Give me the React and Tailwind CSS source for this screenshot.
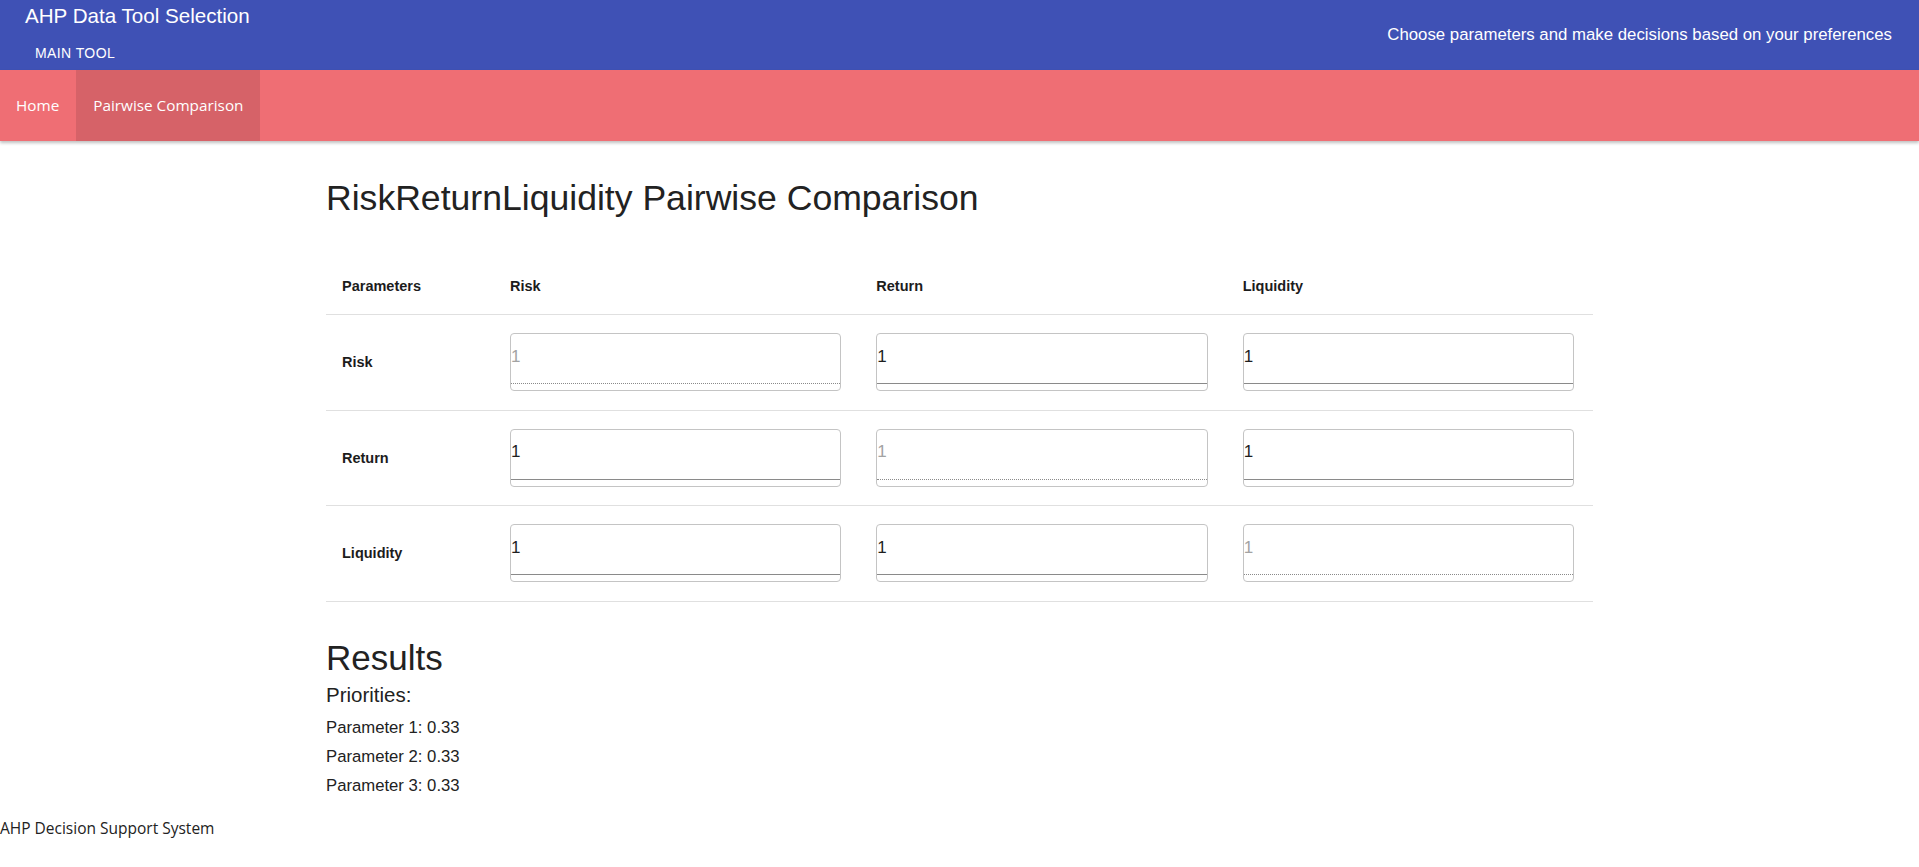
import React from 'react';

const params = ['Risk', 'Return', 'Liquidity'];

const MatrixInput = ({ value, locked }) => (
    <div className="h-[58px] border border-[#c4c4c4] rounded-[4px] pb-[6px] bg-white">
        <input
            readOnly
            value={value}
            className={
                locked
                    ? 'block w-full h-[50px] pb-[4px] px-0 border-0 border-b border-dotted border-[#8a8a8a] outline-none bg-transparent text-[17px] text-[#a3a3a3] font-["Liberation_Sans",Arial,sans-serif]'
                    : 'block w-full h-[50px] pb-[4px] px-0 border-0 border-b border-solid border-[#8a8a8a] outline-none bg-transparent text-[17px] text-[#1f1f1f] font-["Liberation_Sans",Arial,sans-serif]'
            }
        />
    </div>
);

const App = () => (
    <div className="min-h-screen bg-white text-[#212121] font-['Liberation_Sans',Arial,sans-serif]">
        {/* top bar */}
        <header className="flex justify-between h-[70px] bg-[#3f51b5] text-white pl-[25px] pr-[27px]">
            <div className="flex flex-col pt-[4px]">
                <h1 className="text-[20.6px] leading-[24px] font-normal">AHP Data Tool Selection</h1>
                <button className="self-start ml-[10px] mt-[15px] text-[14px] leading-[20px] uppercase tracking-[0.4px]">
                    Main Tool
                </button>
            </div>
            <p className="self-center text-[16.8px] leading-[20px]">
                Choose parameters and make decisions based on your preferences
            </p>
        </header>

        {/* tabs */}
        <nav className="flex h-[71px] bg-[#ef6e74] text-white shadow-[0_2px_3px_rgba(0,0,0,0.25)] font-['Open_Sans',sans-serif] text-[15.3px]">
            <a className="flex items-center pl-4 pr-[17px]">Home</a>
            <a className="flex items-center px-[17px] bg-black/10">Pairwise Comparison</a>
        </nav>

        <main className="w-[1267px] mx-auto">
            <h2 className="mt-[37px] mb-[40px] text-[35.6px] leading-[40px] font-normal text-[#222]">
                RiskReturnLiquidity Pairwise Comparison
            </h2>

            <div className="text-[14.5px] leading-[24px]">
                <div className="grid grid-cols-[168px_1fr_1fr_1fr] border-b border-[#e0e0e0] font-bold text-[#1c1c1c]">
                    <div className="px-4 py-4">Parameters</div>
                    {params.map((p) => (
                        <div key={p} className="px-4 py-4">{p}</div>
                    ))}
                </div>
                {params.map((row, i) => (
                    <div key={row} className="grid grid-cols-[168px_1fr_1fr_1fr] border-b border-[#e0e0e0]">
                        <div className="flex items-center px-4 font-bold text-[#1c1c1c]">{row}</div>
                        {params.map((col, j) => (
                            <div key={col} className="pl-4 pr-[19px] pt-[18px] pb-[18.5px]">
                                <MatrixInput value="1" locked={i === j} />
                            </div>
                        ))}
                    </div>
                ))}
            </div>

            <section className="mt-[36px] text-[#222]">
                <h3 className="text-[35px] leading-[40px] font-normal">Results</h3>
                <h4 className="mt-[5px] text-[20.5px] leading-[24px] font-normal">Priorities:</h4>
                <div className="mt-[6px] flex flex-col text-[16.7px] leading-[29px]">
                    <p>Parameter 1: 0.33</p>
                    <p>Parameter 2: 0.33</p>
                    <p>Parameter 3: 0.33</p>
                </div>
            </section>
        </main>

        <footer className="mt-[16px] text-[15.5px] leading-[24px] font-['Open_Sans',sans-serif] text-[#222]">
            AHP Decision Support System
        </footer>
    </div>
);

export default App;
